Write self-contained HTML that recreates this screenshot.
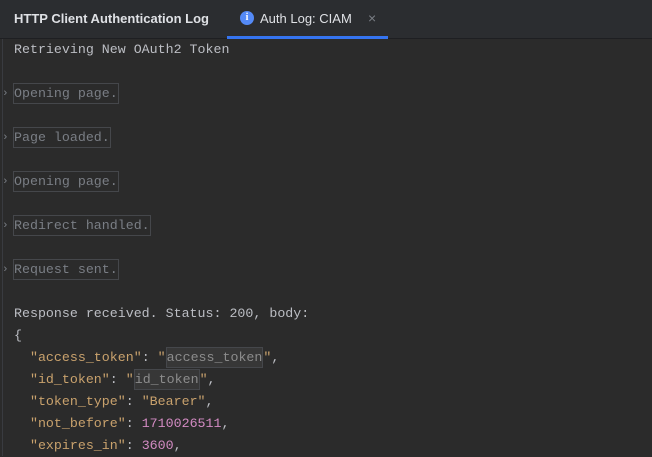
<!DOCTYPE html><html><head><style>
body{margin:0;width:652px;height:456px;background:#2b2b2b;overflow:hidden;font-family:"Liberation Sans",sans-serif;position:relative}
.tabs{position:absolute;left:0;top:0;width:652px;height:38px;background:#2b2d30;border-bottom:1px solid #1e1f22}
.t1{position:absolute;left:14px;top:11px;color:#dfe1e5;font-size:13px;font-weight:bold}
.t2{position:absolute;left:260px;top:11px;color:#dfe1e5;font-size:13px}
.ic{position:absolute;left:240px;top:11px;width:14px;height:14px;border-radius:50%;background:#548af7;color:#fff;font-size:10px;font-weight:bold;text-align:center;line-height:14px;font-family:"Liberation Serif",serif}
.x{position:absolute;left:368px;top:10px;color:#7a7e85;font-size:14px}
.ul{position:absolute;left:227px;top:36px;width:161px;height:3px;background:#3574f0}
.lb{position:absolute;left:2px;top:39px;width:1px;height:417px;background:#393b40}
.c{position:absolute;left:14px;top:39px;font-family:"Liberation Mono",monospace;font-size:13.3px;color:#bcbec4}
.l{height:22px;line-height:22px;position:relative;white-space:pre}
.f{color:#7a7e85;border:1px solid #45474b;display:inline-block;line-height:19px;height:19px;margin-left:-1px}
.ar{position:absolute;left:-12px;color:#7a7e85;font-size:11px}
.k,.s{color:#c9a26d}.n{color:#d38bc3}
.v{background:#373737;color:#8c8c8c;border:1px solid #45474b;line-height:19px;display:inline-block;height:19px}
</style></head><body>
<div class="tabs"><div class="t1">HTTP Client Authentication Log</div><div class="ic">i</div><div class="t2">Auth Log: CIAM</div><div class="x">×</div><div class="ul"></div></div>
<div class="lb"></div>
<div class="c"><div class="l">Retrieving New OAuth2 Token</div><div class="l"></div><div class="l"><span class="ar">›</span><span class="f">Opening page.</span></div><div class="l"></div><div class="l"><span class="ar">›</span><span class="f">Page loaded.</span></div><div class="l"></div><div class="l"><span class="ar">›</span><span class="f">Opening page.</span></div><div class="l"></div><div class="l"><span class="ar">›</span><span class="f">Redirect handled.</span></div><div class="l"></div><div class="l"><span class="ar">›</span><span class="f">Request sent.</span></div><div class="l"></div><div class="l">Response received. Status: 200, body:</div><div class="l">{</div><div class="l">  <span class="k">"access_token"</span>: <span class="s">"</span><span class="v">access_token</span><span class="s">"</span>,</div><div class="l">  <span class="k">"id_token"</span>: <span class="s">"</span><span class="v">id_token</span><span class="s">"</span>,</div><div class="l">  <span class="k">"token_type"</span>: <span class="s">"Bearer"</span>,</div><div class="l">  <span class="k">"not_before"</span>: <span class="n">1710026511</span>,</div><div class="l">  <span class="k">"expires_in"</span>: <span class="n">3600</span>,</div></div>
</body></html>
